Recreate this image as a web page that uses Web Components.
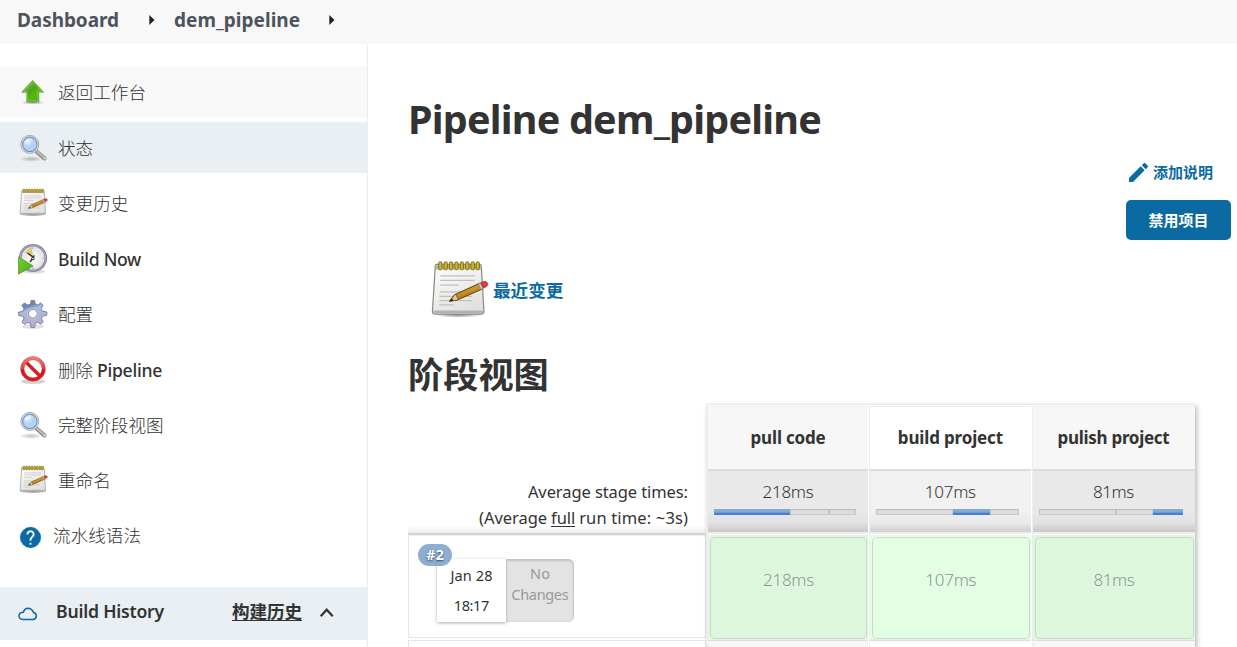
<!DOCTYPE html>
<html lang="zh-CN"><head><meta charset="utf-8"><title>dem_pipeline [Jenkins]</title>
<style>
html,body{margin:0;height:647px;overflow:hidden;background:#fff}
body{font-family:"Noto Sans","Noto Sans CJK SC",sans-serif;color:#333}
</style></head><body><jenkins-page></jenkins-page>
<script>
const define=(name,html,init)=>customElements.define(name,class extends HTMLElement{
  connectedCallback(){
    if(this.shadowRoot)return;
    const root=this.attachShadow({mode:'open'});
    root.innerHTML=typeof html==='function'?html(this):html;
    if(init)init(this,root);
  }
});

/* One line of text; "fit" gives the advance width the line is tracked to. */
define('text-line','<style>:host{display:block;white-space:nowrap}span{display:inline-block;white-space:nowrap;text-decoration:inherit}</style><span><slot></slot></span>',(el,root)=>{
  const target=+el.getAttribute('fit');
  if(!target)return;
  const span=root.querySelector('span'),n=el.textContent.length;
  const w=span.getBoundingClientRect().width;
  const step=(target-w)/n;
  span.style.letterSpacing=step+'px';
  span.style.marginRight=-step+'px';
});

const icons={
up:`<svg viewBox="0 0 32 32"><defs><linearGradient id="g" x1="0" y1="0" x2="1" y2="1"><stop stop-color="#8fd24a"/><stop offset=".45" stop-color="#4ea31a"/><stop offset=".6" stop-color="#56b80e"/><stop offset="1" stop-color="#4aa60d"/></linearGradient><radialGradient id="s"><stop stop-color="#000" stop-opacity=".4"/><stop offset="1" stop-color="#000" stop-opacity="0"/></radialGradient></defs><ellipse cx="15.600" cy="26.500" rx="12" ry="2.200" fill="url(#s)"/><path d="M15.600 4.500 26.600 16.200h-4.800v9.600h-12v-9.600H4.600Z" fill="url(#g)" stroke="#5fa63d" stroke-linejoin="round" stroke-width=".8"/><path d="M15.600 6 24.600 15.500h-4v9h-10v-9h-4Z" fill="none" stroke="#a4df6d" stroke-opacity=".5" stroke-width=".8"/></svg>`,
search:`<svg viewBox="0 0 32 32"><defs><radialGradient id="g" cx=".35" cy=".3" r=".8"><stop stop-color="#e8f2ff"/><stop offset=".5" stop-color="#b4cff2"/><stop offset="1" stop-color="#b9d6fb"/></radialGradient><radialGradient id="s"><stop stop-color="#000" stop-opacity=".25"/><stop offset="1" stop-color="#000" stop-opacity="0"/></radialGradient></defs><ellipse cx="14" cy="27" rx="12" ry="3" fill="url(#s)"/><path d="m19.500 19.500 8 6.800" stroke="#8b8c87" stroke-width="4.200" stroke-linecap="round"/><path d="m20 19.500 7.500 6.500" stroke="#bdbdb8" stroke-width="2" stroke-linecap="round"/><circle cx="27.700" cy="26.400" r="1" fill="#eee"/><circle cx="12.800" cy="12.400" r="9" fill="#ecece9" stroke="#a8a8a4" stroke-width="1"/><circle cx="12.800" cy="12.400" r="7.200" fill="url(#g)" stroke="#6f95c8" stroke-width="1.200"/><path d="M7.700 12c-.2-4 4.300-6.500 8.500-4-3 .5-4.500 3-8.500 4Z" fill="#fff" opacity=".35"/></svg>`,
note:`<svg viewBox="0 0 48 48"><defs><linearGradient id="g" x2=".5" y2="1"><stop stop-color="#fff"/><stop offset="1" stop-color="#e1e1df"/></linearGradient><linearGradient id="p" x1="0" y1="0" x2=".5" y2="1"><stop stop-color="#f2c15a"/><stop offset="1" stop-color="#a86c0b"/></linearGradient><radialGradient id="s"><stop stop-color="#000" stop-opacity=".5"/><stop offset="1" stop-color="#000" stop-opacity="0"/></radialGradient></defs><ellipse cx="23" cy="44.500" rx="20" ry="2.500" fill="url(#s)"/><path d="M5.500 3.500h35q1 0 1.200 1.500l2.200 36.500q.1 2.500-2 2.500H4q-2.200 0-2-2.500L4.300 5Q4.400 3.500 5.500 3.500Z" fill="url(#g)" stroke="#8a8a86" stroke-width="1"/><path d="M2.700 41h40.600v2.200H3Z" fill="#b2b2b0"/><path d="M5 4.300h36l.3 3.500H4.800Z" fill="#b4b3aa"/><path d="M8.500 13h28M8.300 16.500h28M8.200 20.500h15M8 26h29M7.800 29.500h26M7.600 33h27M7.500 36.500h12" stroke="#bfc0bf" stroke-width="1"/><g fill="#d2b42b" stroke="#7b6c17" stroke-width=".8"><rect x="7" y="1.500" width="2.700" height="6.500" rx="1.300"/><rect x="11.400" y="1.500" width="2.700" height="6.500" rx="1.300"/><rect x="15.800" y="1.500" width="2.700" height="6.500" rx="1.300"/><rect x="20.200" y="1.500" width="2.700" height="6.500" rx="1.300"/><rect x="24.600" y="1.500" width="2.700" height="6.500" rx="1.300"/><rect x="29" y="1.500" width="2.700" height="6.500" rx="1.300"/><rect x="33.400" y="1.500" width="2.700" height="6.500" rx="1.300"/><rect x="37.500" y="1.500" width="2.700" height="6.500" rx="1.300"/></g><path d="m16 33.500 4.500-5.500 20-9 2 4.600L22 32.500Z" fill="url(#p)" stroke="#6f4a0d" stroke-width=".9" stroke-linejoin="round"/><path d="m16 33.500 4.500-5.500q1.700.5 1.400 2.200 1.400.6.600 2.300Z" fill="#e9caa0" stroke="#69450e" stroke-width=".6"/><path d="m16 33.500 2-2.500.9 1.900Z" fill="#222"/><path d="m39.200 19.500 2.200-1 2.200 4.500-2.300 1Z" fill="#c4c6cc" stroke="#777" stroke-width=".5"/><path d="m41.200 18.600 2.600-1.100q2.200-.4 3 1.300.6 2-1 2.900l-2.500 1.100Z" fill="#ef3535" stroke="#9c2e24" stroke-width=".6"/></svg>`,
clock:`<svg viewBox="0 0 32 32"><defs><linearGradient id="g" x2="1" y2="1"><stop stop-color="#70d52c"/><stop offset="1" stop-color="#4fa71c"/></linearGradient><radialGradient id="f"><stop stop-color="#fff"/><stop offset="1" stop-color="#dedfdd"/></radialGradient></defs><ellipse cx="17" cy="28.500" rx="11" ry="2" fill="#aaa" opacity=".4"/><circle cx="16" cy="15" r="12.800" fill="url(#f)" stroke="#8080a0" stroke-width="2.600"/><circle cx="16" cy="15" r="12.800" fill="none" stroke="#acacc4" stroke-width="1"/><path d="M16 14 8.500 9.500l5.500-5Z" fill="#e8cd6b" stroke="#c4a849" stroke-width=".5"/><path d="m10.500 10 5.500 4 1.500-1.500M15.500 15.500l-2.500 3.500" stroke="#333" stroke-width="1.400" fill="none"/><circle cx="16" cy="15.500" r="1.300" fill="#eee" stroke="#333"/><path d="M16 4.500v1.300M25.500 15h1M16 24.500V26" stroke="#999"/><path d="M1.600 14 16 23 1.600 31Z" fill="url(#g)" stroke="#519127" stroke-width=".8"/></svg>`,
gear:`<svg viewBox="0 0 32 32"><defs><linearGradient id="g" x2=".35" y2="1"><stop stop-color="#7788a9"/><stop offset=".3" stop-color="#7187b0"/><stop offset=".43" stop-color="#a9bbda"/><stop offset="1" stop-color="#b3aed0"/></linearGradient></defs><ellipse cx="16" cy="28.500" rx="11" ry="2.300" fill="#bbb" opacity=".45"/><path transform="translate(-.4 .6)" fill-rule="evenodd" d="m13.800 5.500.7-3.700h3.500l.7 3.700 2.400 1 3-2.100 2.500 2.400-2 3.100 1 2.500 4.600 1v3.300l-4.200.8-1.200 2.600 1.900 3.100-2.500 2.500-3.200-2.100-2.300 1.100-.8 4.300h-3.400l-.8-4.200-2.500-1.100-3.300 2.200-2.500-2.500 2-3.400-1.100-2.300L2 16.900v-3.300l4.400-1L7.400 10 5.200 6.900l2.500-2.500 3.500 2.100ZM16.300 10.600a4.400 4.400 0 1 0 0 8.800 4.400 4.400 0 0 0 0-8.800Z" fill="url(#g)" stroke="#747c98" stroke-width=".9" stroke-linejoin="round"/><circle cx="15.900" cy="15.600" r="5.400" fill="none" stroke="#d3dbeb" stroke-width="1" opacity=".6"/></svg>`,
stop:`<svg viewBox="0 0 32 32"><defs><linearGradient id="g" x2="0" y2="1"><stop stop-color="#ef8580"/><stop offset=".48" stop-color="#df4140"/><stop offset=".55" stop-color="#d5161a"/><stop offset="1" stop-color="#df171b"/></linearGradient></defs><ellipse cx="16" cy="27.500" rx="12" ry="2.300" fill="#888" opacity=".4"/><circle cx="16" cy="14.800" r="10.300" fill="#fff"/><path d="m8.300 7.500 15.200 15" stroke="#cf2425" stroke-width="3.500"/><path fill-rule="evenodd" d="M16 2.400a12.400 12.400 0 1 0 0 24.800 12.400 12.400 0 0 0 0-24.800Zm0 3.400a9 9 0 1 1 0 18 9 9 0 0 1 0-18Z" fill="url(#g)" stroke="#c83c3c" stroke-width=".4"/></svg>`,
help:`<svg viewBox="0 0 24 24"><path d="M12 2a10 10 0 1 0 0 20 10 10 0 0 0 0-20Zm1 17h-2v-2h2v2Zm2.070-7.750-.9.920C13.450 12.900 13 13.500 13 15h-2v-.5c0-1.100.45-2.100 1.170-2.830l1.240-1.260c.37-.36.59-.86.59-1.410a2 2 0 1 0-4 0H8a4 4 0 1 1 8 0c0 .88-.36 1.680-.93 2.250Z" fill="#0b6aa2" stroke="#0b6aa2" stroke-width=".2"/></svg>`,
cloud:`<svg viewBox="0 0 20 14"><path d="M5 12.500h10a3.600 3.600 0 0 0 .5-7.100Q14 1.500 10 1.200 6.500 1.300 5.400 5.200 1 5.200 1 9q.3 3.200 4 3.500Z" fill="none" stroke="#0b6aa2" stroke-width="1.500" stroke-linejoin="round"/></svg>`,
chevron:`<svg viewBox="0 0 16 12"><path d="m1.700 9.300 6-6.600 6 6.600" fill="none" stroke="#333" stroke-width="2.200"/></svg>`,
caret:`<svg viewBox="0 0 6 10"><path d="M.3 0 5.500 5 .3 10Z" fill="#222"/></svg>`,
pencil:`<svg viewBox="3 3 18 18"><path d="M3 17.250V21h3.750L17.810 9.940l-3.750-3.750L3 17.250ZM20.710 7.040a1 1 0 0 0 0-1.410l-2.340-2.340a1 1 0 0 0-1.410 0l-1.830 1.830 3.750 3.750 1.830-1.830Z" fill="#0b6aa2"/></svg>`
};
define('ui-icon',el=>`<style>:host{display:block;flex:none}svg{display:block;width:100%;height:100%}</style>${icons[el.getAttribute('name')]}`);

define('crumb-bar',`<style>:host{display:flex;align-items:center;height:39px;padding:0 0 5px 17px;background:#f8f8f8;font-weight:700;font-size:19px;line-height:28px;color:#4d545d}
text-line{padding-top:1px}ui-icon{width:6px;height:10px;margin:0 0 0 30px}text-line+ui-icon+text-line{margin-left:19px}text-line+ui-icon:last-child{margin-left:29px}</style>
<text-line fit="102">Dashboard</text-line><ui-icon name="caret"></ui-icon><text-line fit="126">dem_pipeline</text-line><ui-icon name="caret"></ui-icon>`);

define('side-task',el=>`<style>:host{display:flex;align-items:center;height:50.450px;flex:none;padding-left:17px;font-size:17.600px;line-height:26px;font-weight:300}
:host([tone=light]){background:#f8f8f8;height:50px}:host([tone=active]){background:#e9eff2;height:51px}:host([icon=clock]){font-weight:500}
ui-icon{width:32px;height:32px;margin-right:9px}:host([icon=note]) ui-icon{width:29px;height:29px;margin:-1px 10px 0 2px}
:host([icon=help]) ui-icon{width:25px;height:25px;margin:3px 10px 0 1px}:host([icon=help]) text-line{margin-top:-1px}b{font-weight:500}</style>
<ui-icon name="${el.getAttribute('icon')}"></ui-icon><text-line fit="${el.getAttribute('fit')}">${el.getAttribute('label').replace('Pipeline','<b>Pipeline</b>')}</text-line>`);

define('build-history',`<style>:host{display:flex;align-items:center;box-sizing:border-box;height:53px;padding:0 33px 5px 18px;background:#e9eff2;font-weight:600;font-size:17.600px;line-height:26px}
.cloud{width:20px;height:14px;margin:5px 18px 0 0}.link{margin-left:auto;text-decoration:underline;text-underline-offset:2px;text-decoration-thickness:1px;font-weight:700}.chev{width:16px;height:12px;margin:4px 0 0 17px}</style>
<ui-icon class="cloud" name="cloud"></ui-icon><text-line fit="108">Build History</text-line><text-line class="link" fit="70">构建历史</text-line><ui-icon class="chev" name="chevron"></ui-icon>`);

define('side-panel',`<style>:host{display:block;box-sizing:border-box;width:368px;flex:none;border-right:1px solid #e9eff0;padding-top:23px}
nav{display:flex;flex-direction:column;gap:5px;height:520px}build-history{margin-right:-1px}</style>
<nav><side-task tone="light" icon="up" label="返回工作台" fit="88"></side-task><side-task tone="active" icon="search" label="状态" fit="35.200"></side-task><side-task icon="note" label="变更历史" fit="70.400"></side-task><side-task icon="clock" label="Build Now" fit="83"></side-task><side-task icon="gear" label="配置" fit="35.200"></side-task><side-task icon="stop" label="删除 Pipeline" fit="104"></side-task><side-task icon="search" label="完整阶段视图" fit="105.600"></side-task><side-task icon="note" label="重命名" fit="52.800"></side-task><side-task icon="help" label="流水线语法" fit="88"></side-task></nav><build-history></build-history>`);

define('project-actions',`<style>:host{display:flex;flex-direction:column;align-items:flex-end;font-weight:600;font-size:15px;line-height:22px;color:#0b6aa2}
.edit{display:flex;align-items:center;gap:5px;height:22px;padding-right:18px}ui-icon{width:19px;height:19px}
button{font:inherit;font-weight:700;width:105px;height:40px;margin:17px 0 0;border:0;border-radius:5px;background:#0b6aa2;color:#fff;padding:0;display:grid;place-items:center}</style>
<div class="edit"><ui-icon name="pencil"></ui-icon><text-line fit="60">添加说明</text-line></div><button><text-line fit="60">禁用项目</text-line></button>`);

define('recent-changes',`<style>:host{display:flex;align-items:center;gap:4px;color:#0b6aa2;font-weight:700;font-size:17.600px;line-height:26px}ui-icon{width:59px;height:59px}</style><ui-icon name="note"></ui-icon><text-line fit="70.400">最近变更</text-line>`);

define('time-meter',`<style>:host{display:block;height:6px;background:#ddd;box-shadow:inset 0 1px 1px #bbb,inset 0 0 1px 1px #c8c8c8;position:relative}
i{display:block;height:6px;margin-left:var(--from);width:var(--len);background:linear-gradient(#84a9d4 55%,#467dd7 65%);box-shadow:0 1px 2px #aaa}
b{position:absolute;left:var(--tick,-1px);top:1px;width:2px;height:4px;background:#c5c5c5}:host{overflow:hidden}</style><i></i><b></b>`);

define('stage-column',el=>`<style>:host{display:grid;grid-template-rows:65px 63px 106px 1fr;width:161.300px;flex:none;box-sizing:border-box;text-align:center;background:#fff;border-left:1px solid #eee}
.head{font-weight:700;font-size:17px;line-height:24px;display:grid;place-items:center;background:var(--head);border-bottom:2px solid #ddd;box-sizing:border-box;border-top:1px solid #eee}
.avg{font-size:17px;line-height:24px;font-weight:350;box-sizing:border-box;padding:9px 12px 0 6px;background:linear-gradient(transparent 65%,#00000008 85%,#00000024),var(--avg);border-bottom:2px solid #eee}
time-meter{margin-top:5px}.avg text-line{padding-left:6px}
.run{background:var(--run);box-sizing:border-box;padding:2px 1px 1px 2px;border-bottom:1px solid #eee;border-top:1px solid #fff}
.box{border:1px solid #ccd8ce;border-radius:5px;box-sizing:border-box;height:102px;padding-top:30px;font-size:17px;line-height:24px;font-weight:350;color:#889888;text-shadow:0 1px 2px #fff8}
.rest{background:var(--head);border-top:1px solid #ddd}</style>
<div class="head"><text-line fit="${el.getAttribute('fit')}">${el.getAttribute('label')}</text-line></div><div class="avg"><text-line fit="${el.getAttribute('tfit')}">${el.getAttribute('time')}</text-line><time-meter></time-meter></div><div class="run"><div class="box"><text-line fit="${el.getAttribute('tfit')}">${el.getAttribute('time')}</text-line></div></div><div class="rest"></div>`);

define('run-card',`<style>:host{display:flex;position:relative;width:137px;height:63px;margin:23px 0 0 28px}
.date{width:69px;box-sizing:border-box;background:#fff;box-shadow:0 1px 3px #aaa;text-align:center;font-size:14.500px;line-height:30px;padding-top:1px}
.changes{width:68px;box-sizing:border-box;background:#e3e3e3;border-radius:0 6px 6px 0;box-shadow:inset 0 1px 2px 1px #c2c2c2;text-align:center;font-size:14.500px;line-height:21px;color:#999;padding-top:4px}
.badge{position:absolute;left:-19px;top:-15px;width:34px;height:22px;border-radius:11px;background:#8baed2;color:#fff;font-weight:700;font-size:14px;line-height:22px;text-align:center;text-shadow:0 1px 2px #345}</style>
<div class="date"><text-line fit="42">Jan 28</text-line><text-line fit="35">18:17</text-line></div><div class="changes"><text-line fit="20">No</text-line><text-line fit="57">Changes</text-line></div><div class="badge"><text-line fit="18">#2</text-line></div>`);

define('stage-view',`<style>:host{display:grid;grid-template-columns:298px 489px;height:243px}
.runs{display:flex;flex-direction:column}.avg{box-sizing:border-box;height:131px;padding:75px 18px 0 0;text-align:right;font-size:16.500px;line-height:26px;border-bottom:2px solid #d4d4d4;background:linear-gradient(#fff0 94%,#0001)}
.line{display:flex;justify-content:flex-end;gap:4px}u{text-underline-offset:2px;text-decoration-thickness:1px}
.row{box-sizing:border-box;height:103px;border:1px solid #e5e5e5;border-top-color:#eee}.next{flex:1;margin-top:2px;border:1px solid #e5e5e5;border-bottom:0}
.table{display:flex;background:#fff;border:1px solid #e6ecec;border-bottom:0;box-sizing:border-box;padding:1px 0 0;gap:1px;box-shadow:2px 2px 5px #bbb;z-index:1}
stage-column{--head:#f7f7f7;--avg:#e9e9e9;--run:#ddf7dd}.mid{--head:#fff;--avg:#f1f1f1;--run:#e3ffe3}</style>
<div class="runs"><div class="avg"><text-line fit="160">Average stage times:</text-line><div class="line"><text-line fit="68">(Average</text-line><text-line fit="24"><u>full</u></text-line><text-line fit="109">run time: ~3s)</text-line></div></div><div class="row"><run-card></run-card></div><div class="next"></div></div>
<div class="table"><stage-column label="pull code" fit="75" time="218ms" tfit="51" style="--from:0px;--len:76px;--tick:114px"></stage-column><stage-column class="mid" label="build project" fit="105" time="107ms" tfit="51" style="--from:77px;--len:37px"></stage-column><stage-column label="pulish project" fit="112" time="81ms" tfit="41" style="--from:114px;--len:30px;--tick:76px"></stage-column></div>`);

define('project-main',`<style>:host{display:flex;flex-direction:column;flex:1;min-width:0;padding:44px 0 0 40px}
h1,h2{margin:0;font-weight:700}h1{font-size:39.500px;line-height:62px}project-actions{margin:11px 6px 0 0}recent-changes{margin:20px 0 0 22px}h2{font-size:35.200px;line-height:52px;margin:29px 0 4px}</style>
<h1><text-line fit="413">Pipeline dem_pipeline</text-line></h1><project-actions></project-actions><recent-changes></recent-changes><h2><text-line fit="140.800">阶段视图</text-line></h2><stage-view></stage-view>`);

define('jenkins-page',`<style>:host{display:flex;flex-direction:column;height:647px;overflow:hidden}main{display:flex;flex:1;min-height:0}</style><crumb-bar></crumb-bar><main><side-panel></side-panel><project-main></project-main></main>`);
</script></body></html>
